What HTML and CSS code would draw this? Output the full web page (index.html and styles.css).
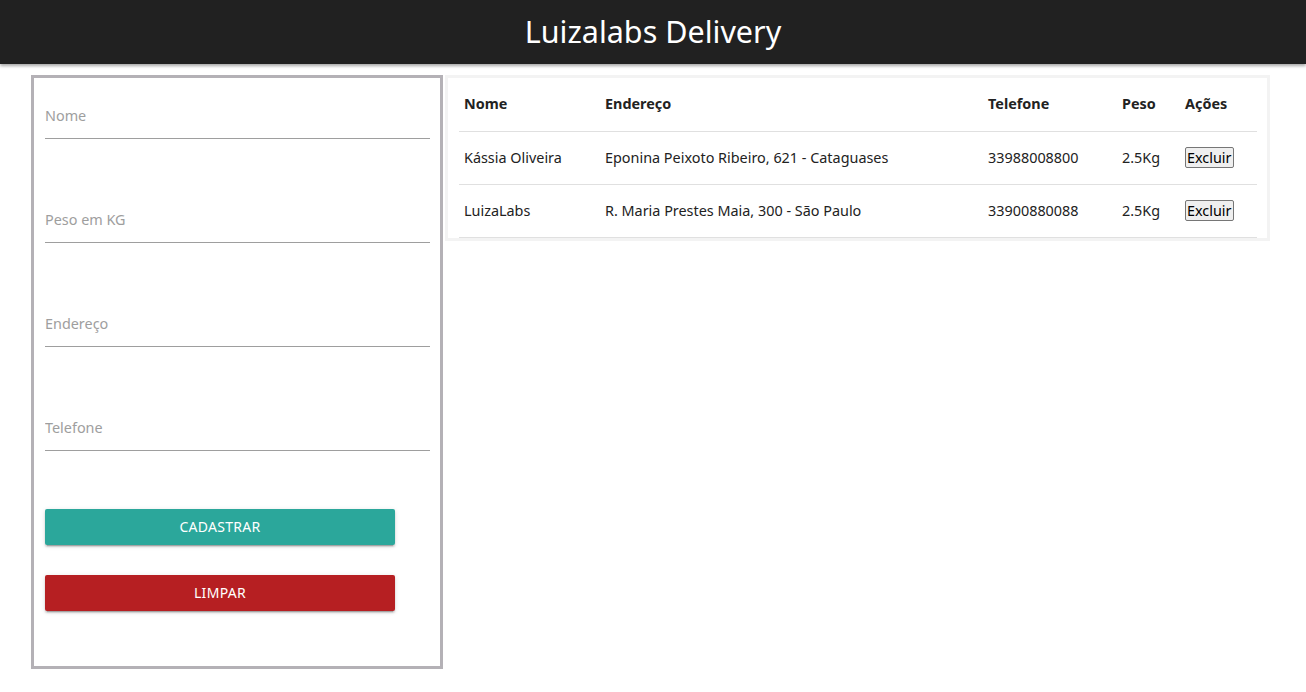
FILE: index.html
```html
<!DOCTYPE html>
<html lang="pt-BR">
<head>
<meta charset="utf-8">
<title>Luizalabs Delivery</title>
<link rel="stylesheet" href="styles.css">
</head>
<body>
<header class="topbar">
  <h1 class="brand">Luizalabs Delivery</h1>
</header>
<main class="content">
  <form class="form-card">
    <div class="field"><input class="input" type="text" placeholder="Nome"></div>
    <div class="field"><input class="input" type="text" placeholder="Peso em KG"></div>
    <div class="field"><input class="input" type="text" placeholder="Endereço"></div>
    <div class="field"><input class="input" type="text" placeholder="Telefone"></div>
    <div class="actions">
      <button type="button" class="btn btn-teal">Cadastrar</button>
      <button type="button" class="btn btn-red">Limpar</button>
    </div>
  </form>
  <section class="table-card">
    <table class="grid">
      <colgroup>
        <col class="c-nome"><col class="c-end"><col class="c-tel"><col class="c-peso"><col class="c-acao">
      </colgroup>
      <thead>
        <tr><th>Nome</th><th>Endereço</th><th>Telefone</th><th>Peso</th><th>Ações</th></tr>
      </thead>
      <tbody>
        <tr><td>Kássia Oliveira</td><td>Eponina Peixoto Ribeiro, 621 - Cataguases</td><td>33988008800</td><td>2.5Kg</td><td><button type="button" class="del">Excluir</button></td></tr>
        <tr><td>LuizaLabs</td><td>R. Maria Prestes Maia, 300 - São Paulo</td><td>33900880088</td><td>2.5Kg</td><td><button type="button" class="del">Excluir</button></td></tr>
      </tbody>
    </table>
  </section>
</main>
</body>
</html>
```

FILE: styles.css
```css
* { box-sizing: border-box; }
html, body { margin: 0; padding: 0; background: #fff; }
body { font-family: "Noto Sans", "Open Sans", sans-serif; color: #222; }

.topbar {
  height: 64px;
  background: #212121;
  display: flex;
  align-items: center;
  justify-content: center;
  box-shadow: 0 2px 3px rgba(0,0,0,0.35);
  position: relative;
  z-index: 1;
}
.brand {
  margin: 0;
  color: #fff;
  font-weight: 400;
  font-size: 30.5px;
  line-height: 1;
  padding-bottom: 1px;
}

.content {
  display: flex;
  align-items: flex-start;
  gap: 2px;
  padding: 11px 0 0 31px;
}

.form-card {
  width: 412px;
  height: 594px;
  border: 3px solid #b4b1b6;
  padding: 12px 10px 0 11px;
  display: flex;
  flex-direction: column;
  gap: 55px;
}
.field { height: 49px; }
.input {
  width: 100%;
  height: 49px;
  border: 0;
  border-bottom: 1px solid #9e9e9e;
  outline: none;
  background: transparent;
  padding: 2px 0 0;
  font-family: inherit;
  font-size: 14.4px;
  color: #333;
}
.input::placeholder { color: #9e9e9e; }

.actions {
  display: flex;
  flex-direction: column;
  gap: 30px;
  padding-top: 3px;
}
.btn {
  width: 350px;
  height: 36px;
  border: 0;
  border-radius: 2px;
  color: #fff;
  font-family: inherit;
  font-size: 14px;
  letter-spacing: 0.3px;
  text-transform: uppercase;
  padding: 0 0 1px;
  box-shadow: 0 2px 2px rgba(0,0,0,0.14), 0 1px 5px rgba(0,0,0,0.12), 0 3px 1px -2px rgba(0,0,0,0.2);
  cursor: pointer;
}
.btn-teal { background: #2ba79b; }
.btn-red { background: #b61f22; }

.table-card {
  width: 825px;
  border: 3px solid #f3f3f3;
  padding: 0 10px 0 11px;
}
.grid {
  width: 100%;
  border-collapse: collapse;
  table-layout: fixed;
  font-size: 14.4px;
}
.c-nome { width: 141px; }
.c-end { width: 383px; }
.c-tel { width: 134px; }
.c-peso { width: 63px; }
.c-acao { width: 77px; }
.grid th, .grid td {
  height: 53px;
  padding: 0 5px;
  text-align: left;
  border-bottom: 1px solid #e0e0e0;
  white-space: nowrap;
}
.grid th { font-weight: 700; color: #222; padding-bottom: 2px; }
.grid td { color: #222; }
.del {
  font-family: inherit;
  font-size: 14.4px;
  color: #000;
  background: #efefef;
  border: 1px solid #767676;
  border-radius: 2px;
  padding: 0 1px;
  height: 21px;
  line-height: 19px;
}
```
